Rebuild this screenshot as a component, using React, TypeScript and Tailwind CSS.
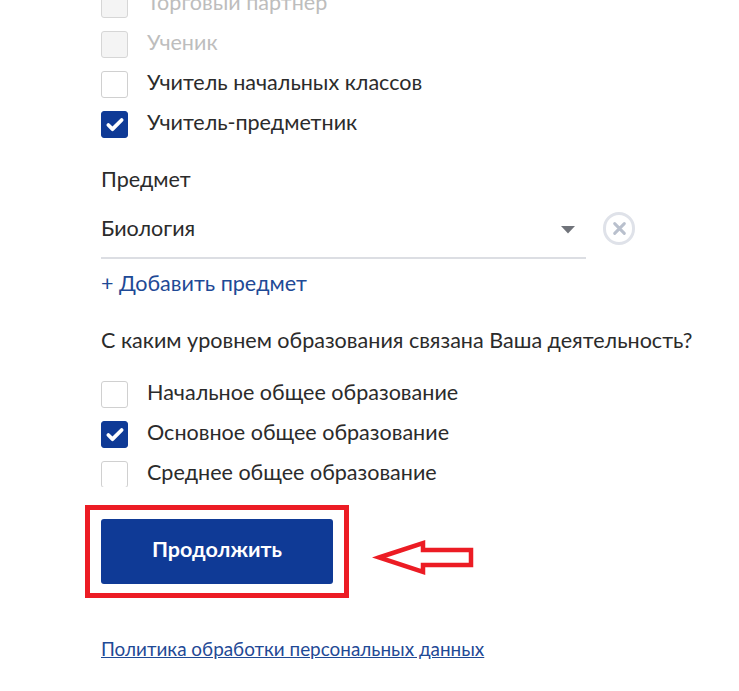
import React from 'react';
import { Check } from 'lucide-react';

function Checkbox({ label, checked, disabled }: { label: string; checked?: boolean; disabled?: boolean }) {
  return (
    <div className="flex items-center h-[27px] mb-[13px]">
      <div
        className={
          'w-[27px] h-[27px] shrink-0 rounded-[3px] border flex items-center justify-center ' +
          (checked ? 'bg-[#0f3a96] border-[#0f3a96]' : disabled ? 'bg-[#f4f4f4] border-[#d6d6d6]' : 'bg-white border-[#d0d0d0]')
        }
      >
        {checked && <Check className="w-[20px] h-[20px] text-white" strokeWidth={4.5} />}
      </div>
      <span className={'ml-[19px] -mt-[4px] text-[21.55px] leading-[27px] ' + (disabled ? 'text-[#bdbdbd]' : 'text-[#2b2b2b]')}>{label}</span>
    </div>
  );
}

export default function App() {
  return (
    <div className="relative w-[739px] h-[691px] overflow-hidden bg-white pl-[101px] font-['Lato','Noto_Sans',sans-serif]">
      {/* Roles */}
      <div className="-mt-[9px]">
        <Checkbox label="Торговый партнер" disabled />
        <Checkbox label="Ученик" disabled />
        <Checkbox label="Учитель начальных классов" />
        <Checkbox label="Учитель-предметник" checked />
      </div>

      {/* Subject */}
      <div className="mt-[28px] text-[21.55px] leading-[27px] text-[#2b2b2b]">Предмет</div>
      <div className="mt-[15px] flex items-start">
        <div className="w-[485px] h-[51px] border-b-2 border-[#dcdee3] flex items-start justify-between pt-[7px]">
          <span className="text-[21.55px] leading-[27px] text-[#2b2b2b]">Биология</span>
          <svg className="mt-[10px] mr-[10px]" width="16" height="9" viewBox="0 0 16 9">
            <path d="M1 1h14L8 8.5z" fill="#70737a" />
          </svg>
        </div>
        <div className="ml-[17px] mt-[4px] w-[32px] h-[33px] rounded-full border-[3px] border-[#dfe2e9] flex items-center justify-center">
          <svg width="15" height="15" viewBox="0 0 14 14">
            <path d="M2.5 2.5l9 9M11.5 2.5l-9 9" stroke="#b9c0cd" strokeWidth="2.8" strokeLinecap="round" />
          </svg>
        </div>
      </div>
      <div className="mt-[11px] text-[21.55px] leading-[27px] text-[#1f4a96]">+ Добавить предмет</div>

      {/* Education level */}
      <div className="mt-[30px] text-[21.55px] leading-[27px] text-[#2b2b2b]">С каким уровнем образования связана Ваша деятельность?</div>
      <div className="mt-[23px] pt-[4px] h-[110px] overflow-hidden">
        <Checkbox label="Начальное общее образование" />
        <Checkbox label="Основное общее образование" checked />
        <Checkbox label="Среднее общее образование" />
      </div>

      {/* Continue */}
      <div className="-ml-[16px] mt-[18px] w-[264px] h-[93px] border-[5px] border-[#ec1c24] pl-[11px] pt-[9px]">
        <button className="w-[232px] h-[65px] pb-[4px] rounded-[3px] bg-[#0f3a96] text-white text-[21.5px] font-bold">Продолжить</button>
      </div>

      {/* Arrow annotation */}
      <svg className="absolute left-[372px] top-[538px]" width="104" height="40" viewBox="0 0 104 40">
        <path
          d="M7 19.5L51 5V12H99V27H51V34Z"
          fill="white"
          stroke="#ec1c24"
          strokeWidth="4.5"
        />
      </svg>

      <a className="block mt-[39px] w-fit text-[18.9px] leading-[24px] text-[#1f4a96] underline">Политика обработки персональных данных</a>
    </div>
  );
}
